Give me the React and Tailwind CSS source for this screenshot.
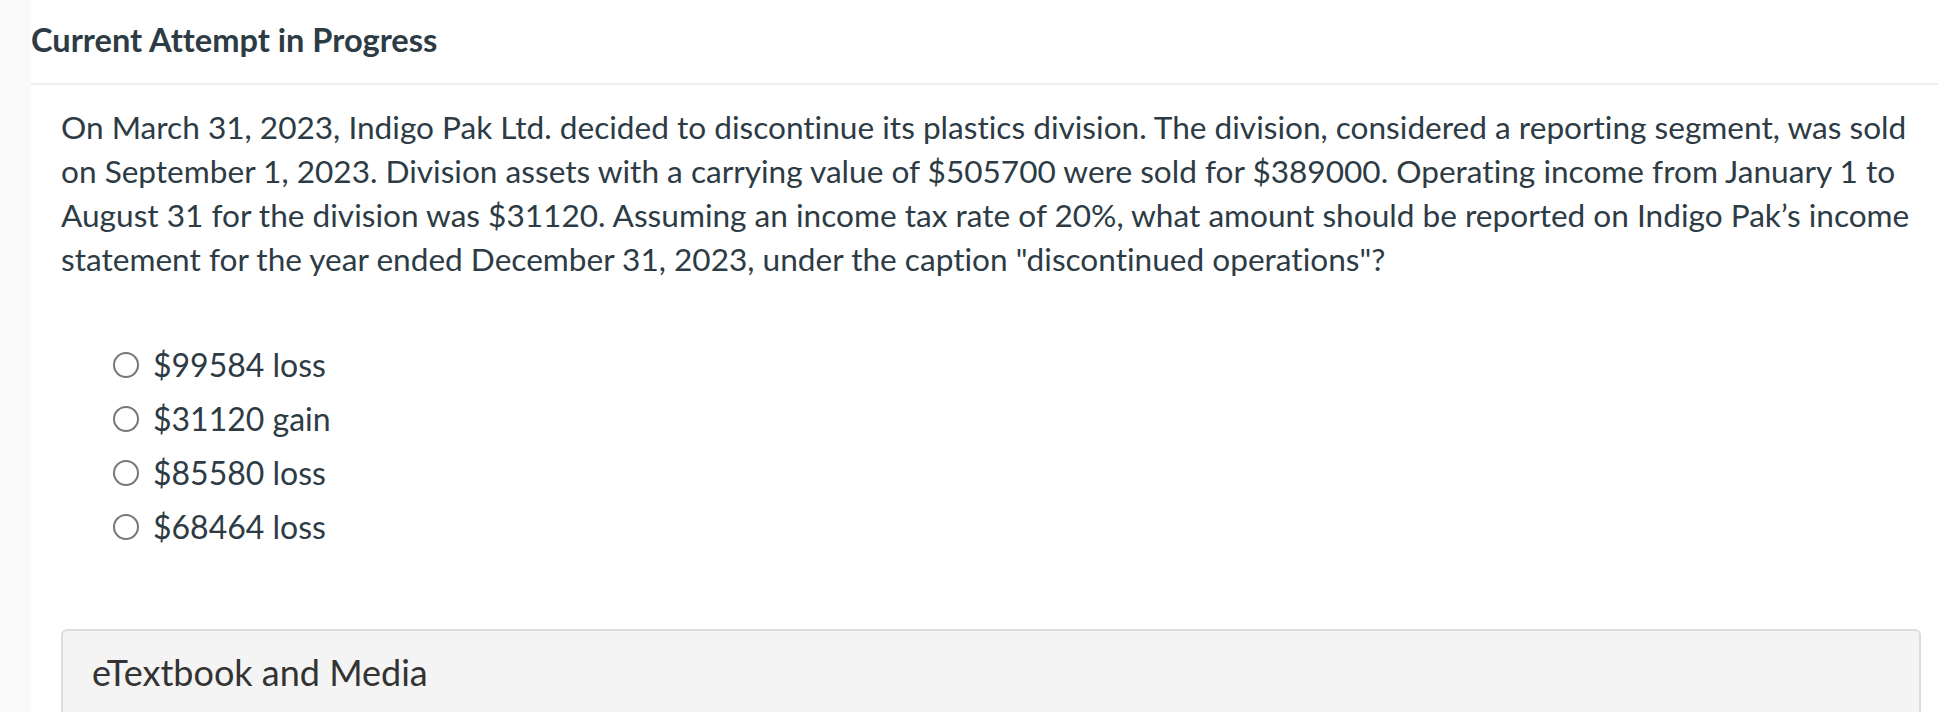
import React from 'react'

const options = ['$99584 loss', '$31120 gain', '$85580 loss', '$68464 loss']

export default function App() {
  return (
    <div className="flex min-h-[712px] bg-white font-['Lato',sans-serif] text-[#2d3b45] [font-variant-ligatures:none]">
      <div className="w-[31px] shrink-0 bg-[#fafafa]" />
      <div className="flex-1">
        <div className="h-[83px] pt-[20px] text-[32.6px] font-bold leading-[40px]">
          Current Attempt in Progress
        </div>
        <div className="h-[2px] bg-[#eeeeee]" />
        <div className="pl-[30px] pr-[18px] pt-[20px]">
          <p className="text-[31.6px] leading-[44px]">
            On March 31, 2023, Indigo Pak Ltd. decided to discontinue its plastics division. The division, considered a reporting segment, was sold on September 1, 2023. Division assets with a carrying value of $505700 were sold for $389000. Operating income from January 1 to August 31 for the division was $31120. Assuming an income tax rate of 20%, what amount should be reported on Indigo Pak&rsquo;s income statement for the year ended December 31, 2023, under the caption "discontinued operations"?
          </p>
          <div className="mt-[62px] flex flex-col gap-[10px] pl-[52px]">
            {options.map((o) => (
              <label key={o} className="flex h-[44px] items-center gap-[14px] text-[32px]">
                <span className="h-[26px] w-[26px] shrink-0 rounded-full border-[2.5px] border-[#777777] bg-white" />
                <span>{o}</span>
              </label>
            ))}
          </div>
          <div className="mt-[80px] h-[90px] w-[1860px] rounded-[6px] border-2 border-[#dcdcdc] bg-[#f4f4f4] px-[29px] pt-[19px] text-[36px] leading-[44px] text-[#333333]">
            eTextbook and Media
          </div>
        </div>
      </div>
    </div>
  )
}
